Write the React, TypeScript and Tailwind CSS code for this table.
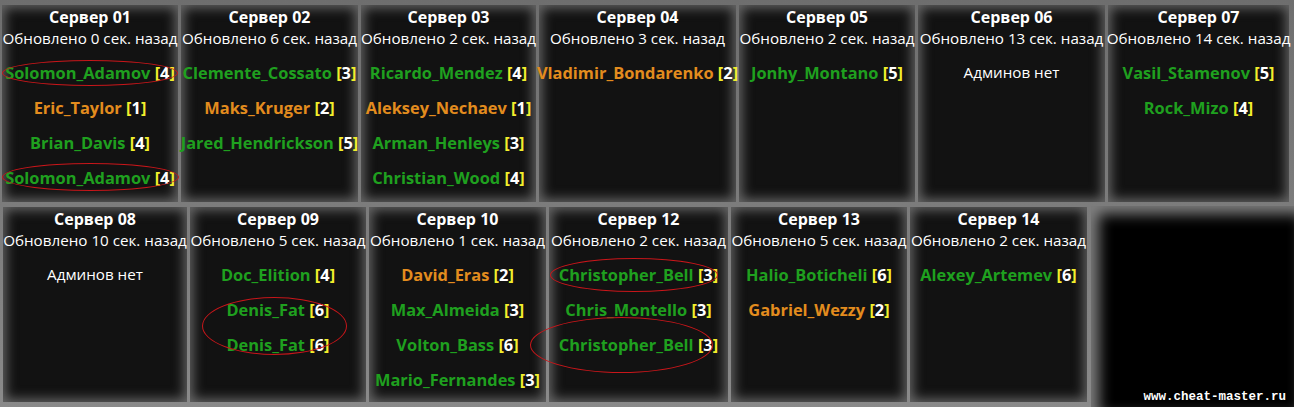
import React from "react";

type Admin = { name: string; lvl: number; c: "g" | "o" };
type Server = { title: string; upd: number; w: number; admins: Admin[] };

const top: Server[] = [
  { title: "Сервер 01", upd: 0, w: 176, admins: [
    { name: "Solomon_Adamov", lvl: 4, c: "g" },
    { name: "Eric_Taylor", lvl: 1, c: "o" },
    { name: "Brian_Davis", lvl: 4, c: "g" },
    { name: "Solomon_Adamov", lvl: 4, c: "g" },
  ] },
  { title: "Сервер 02", upd: 6, w: 177, admins: [
    { name: "Clemente_Cossato", lvl: 3, c: "g" },
    { name: "Maks_Kruger", lvl: 2, c: "o" },
    { name: "Jared_Hendrickson", lvl: 5, c: "g" },
  ] },
  { title: "Сервер 03", upd: 2, w: 175, admins: [
    { name: "Ricardo_Mendez", lvl: 4, c: "g" },
    { name: "Aleksey_Nechaev", lvl: 1, c: "o" },
    { name: "Arman_Henleys", lvl: 3, c: "g" },
    { name: "Christian_Wood", lvl: 4, c: "g" },
  ] },
  { title: "Сервер 04", upd: 3, w: 197, admins: [
    { name: "Vladimir_Bondarenko", lvl: 2, c: "o" },
  ] },
  { title: "Сервер 05", upd: 2, w: 176, admins: [
    { name: "Jonhy_Montano", lvl: 5, c: "g" },
  ] },
  { title: "Сервер 06", upd: 13, w: 187, admins: [] },
  { title: "Сервер 07", upd: 14, w: 181, admins: [
    { name: "Vasil_Stamenov", lvl: 5, c: "g" },
    { name: "Rock_Mizo", lvl: 4, c: "g" },
  ] },
];

const bottom: Server[] = [
  { title: "Сервер 08", upd: 10, w: 184, admins: [] },
  { title: "Сервер 09", upd: 5, w: 176, admins: [
    { name: "Doc_Elition", lvl: 4, c: "g" },
    { name: "Denis_Fat", lvl: 6, c: "g" },
    { name: "Denis_Fat", lvl: 6, c: "g" },
  ] },
  { title: "Сервер 10", upd: 1, w: 177, admins: [
    { name: "David_Eras", lvl: 2, c: "o" },
    { name: "Max_Almeida", lvl: 3, c: "g" },
    { name: "Volton_Bass", lvl: 6, c: "g" },
    { name: "Mario_Fernandes", lvl: 3, c: "g" },
  ] },
  { title: "Сервер 12", upd: 2, w: 179, admins: [
    { name: "Christopher_Bell", lvl: 3, c: "g" },
    { name: "Chris_Montello", lvl: 3, c: "g" },
    { name: "Christopher_Bell", lvl: 3, c: "g" },
  ] },
  { title: "Сервер 13", upd: 5, w: 176, admins: [
    { name: "Halio_Boticheli", lvl: 6, c: "g" },
    { name: "Gabriel_Wezzy", lvl: 2, c: "o" },
  ] },
  { title: "Сервер 14", upd: 2, w: 177, admins: [
    { name: "Alexey_Artemev", lvl: 6, c: "g" },
  ] },
];

function Card({ s, h }: { s: Server; h: string }) {
  return (
    <div
      className={`${h} shrink-0 flex flex-col items-center bg-[#121212] shadow-[inset_0_0_12px_3px_rgba(160,160,160,0.6)] overflow-visible whitespace-nowrap`}
      style={{ width: s.w }}
    >
      <div className="mt-[2px] text-[16px] leading-[20px] font-bold text-white">{s.title}</div>
      <div className="text-[15.2px] leading-[20px] text-white mt-px">Обновлено {s.upd} сек. назад</div>
      <div className="mt-[7px] flex flex-col items-center">
        {s.admins.length === 0 ? (
          <div className="h-[35px] leading-[35px] text-[15.2px] text-white">Админов нет</div>
        ) : (
          s.admins.map((a, i) => (
            <div key={i} className="h-[35px] leading-[35px] text-[16.4px] font-bold">
              <span className={a.c === "g" ? "text-[#1fa01f]" : "text-[#e38c1e]"}>{a.name}</span>{" "}
              <span className="text-[#f2ef2c]">[</span>
              <span className="text-white">{a.lvl}</span>
              <span className="text-[#f2ef2c]">]</span>
            </div>
          ))
        )}
      </div>
    </div>
  );
}

const ellipses = [
  "left-[2px] top-[60px] w-[176px] h-[26px]",
  "left-[2px] top-[163px] w-[177px] h-[28px]",
  "left-[202px] top-[297px] w-[145px] h-[58px]",
  "left-[550px] top-[258px] w-[168px] h-[34px]",
  "left-[530px] top-[317px] w-[183px] h-[56px]",
];

export default function App() {
  return (
    <div
      className="relative w-[1294px] h-[407px] overflow-hidden bg-gradient-to-b from-[#6e6e6e] to-[#8a8a8a]"
      style={{ fontFamily: '"Open Sans", "Noto Sans", sans-serif' }}
    >
      <div className="flex gap-[3px] pl-[2px] pt-[5px]">
        {top.map((s, i) => (
          <Card key={i} s={s} h="h-[197px]" />
        ))}
      </div>
      <div className="flex gap-[3px] pl-[3px] mt-[4px] h-[201px]">
        {bottom.map((s, i) => (
          <Card key={i} s={s} h="h-[195px] mt-px" />
        ))}
        <div className="flex-1 ml-px h-full bg-black shadow-[inset_8px_8px_14px_0_rgba(170,170,170,0.75)] flex items-end justify-end pr-[8px] pb-[3px]">
          <span
            className="text-white font-bold text-[12.5px] leading-[14px]"
            style={{ fontFamily: '"Liberation Mono", "DejaVu Sans Mono", monospace' }}
          >
            www.cheat-master.ru
          </span>
        </div>
      </div>
      {ellipses.map((c, i) => (
        <div key={i} className={`absolute ${c} rounded-[50%] border border-[#c8161a] pointer-events-none`} />
      ))}
    </div>
  );
}
